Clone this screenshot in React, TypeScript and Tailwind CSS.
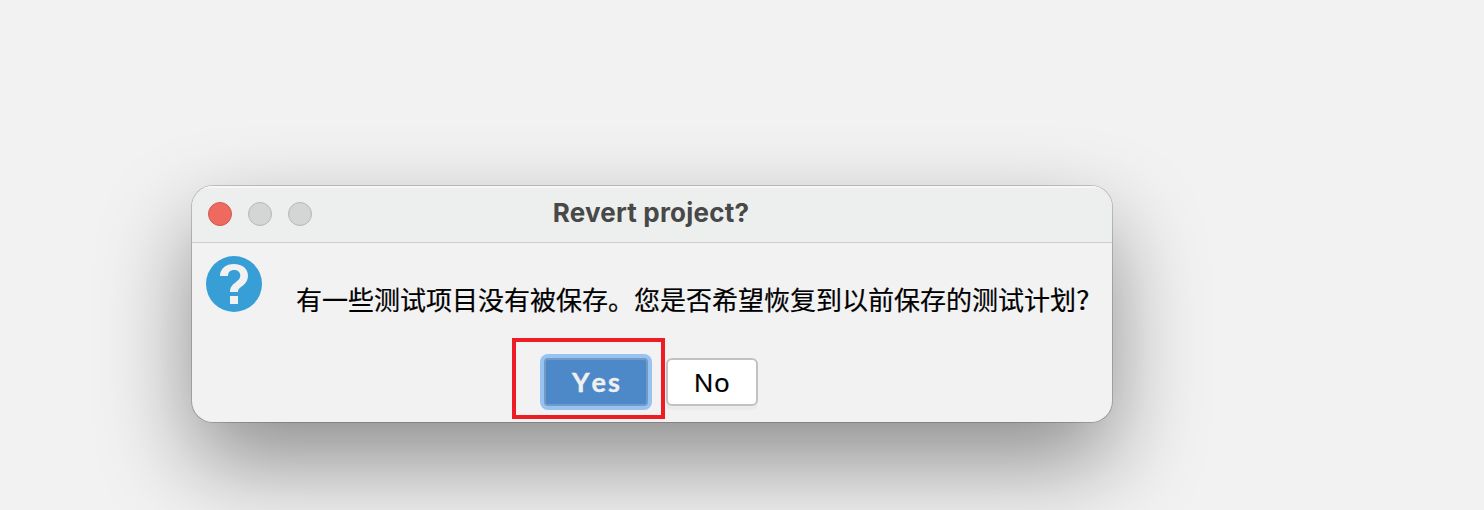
import React from "react";

function TitleBar() {
  return (
    <header className="flex h-[57px] shrink-0 items-center border-b border-[#cbcecd] bg-[#edefee] px-4 shadow-[inset_0_2px_0_#f6f7f7]">
      <div className="flex w-[104px] gap-4">
        <span className="size-6 rounded-full border border-[#d5564d] bg-[#ee6a5f]" />
        <span className="size-6 rounded-full border border-[#b4b7b6] bg-[#d4d6d5]" />
        <span className="size-6 rounded-full border border-[#b4b7b6] bg-[#d4d6d5]" />
      </div>
      <h1 className="flex-1 pr-[106px] pb-0.5 text-center font-['Inter',sans-serif] text-[26px] leading-[32px] font-bold tracking-[0.2px] whitespace-nowrap text-[#484848]">
        Revert project?
      </h1>
    </header>
  );
}

function QuestionIcon() {
  return (
    <svg className="size-14 shrink-0" viewBox="0 0 56 56" fill="none">
      <circle cx="28" cy="28" r="28" fill="#389fd6" />
      <path
        d="M14 20C14 12.500 20 8 28 8C36.500 8 42 13 42 19.500C42 24 40 27 37 29.500C34 32 32 32.500 32 36H24C24 30.500 27 28.500 30 26C32.500 24 34.300 22.500 34.300 19.500C34.300 16 31.500 14 28 14C24.500 14 22 16 22 20Z"
        fill="#f1f1f1"
      />
      <path d="M24 40h8v8h-8z" fill="#f1f1f1" />
    </svg>
  );
}

export default function App() {
  return (
    <main className="h-[510px] w-[1484px] overflow-hidden bg-[#f2f2f2] pt-[186px] pl-[192px]">
      <section className="flex h-[236px] w-[920px] flex-col overflow-hidden rounded-[21px] bg-[#f2f2f2] shadow-[0_0_0_1px_rgba(0,0,0,0.18),0_40px_92px_rgba(0,0,0,0.42)]">
        <TitleBar />
        <div className="flex h-[95px] shrink-0 pt-[13px] pl-[14px]">
          <QuestionIcon />
          <p className="mt-[24px] ml-[34px] font-['Noto_Sans_CJK_SC',sans-serif] text-[26px] leading-[38px] whitespace-nowrap text-black [-webkit-text-stroke:0.2px_black]">
            有一些测试项目没有被保存。您是否希望恢复到以前保存的测试计划
            <span className="inline-block origin-left scale-x-110">?</span>
          </p>
        </div>
        <div className="flex pl-[320px]">
          <div className="flex h-[81px] w-[153px] shrink-0 border-4 border-[#ee1c25] pt-4 pl-7">
            <button className="h-12 w-[104px] rounded-[4px] border-2 border-[#7399c6] bg-[#4d89c9] pl-0.5 font-['Lato',sans-serif] text-[27px] leading-[44px] font-bold tracking-[2px] text-[#f0f0f0] shadow-[0_0_0_4px_#97c3f3] [font-kerning:none] [-webkit-text-stroke:0.4px_#f0f0f0]">
              Yes
            </button>
          </div>
          <button className="mt-5 ml-px h-12 w-[92px] rounded-[6px] border-2 border-[#c2c2c2] bg-white font-['Noto_Sans',sans-serif] text-[26px] leading-[44px] tracking-[0.4px] text-black shadow-[0_4px_0_#ebebeb] [-webkit-text-stroke:0.2px_black]">
            No
          </button>
        </div>
      </section>
    </main>
  );
}
